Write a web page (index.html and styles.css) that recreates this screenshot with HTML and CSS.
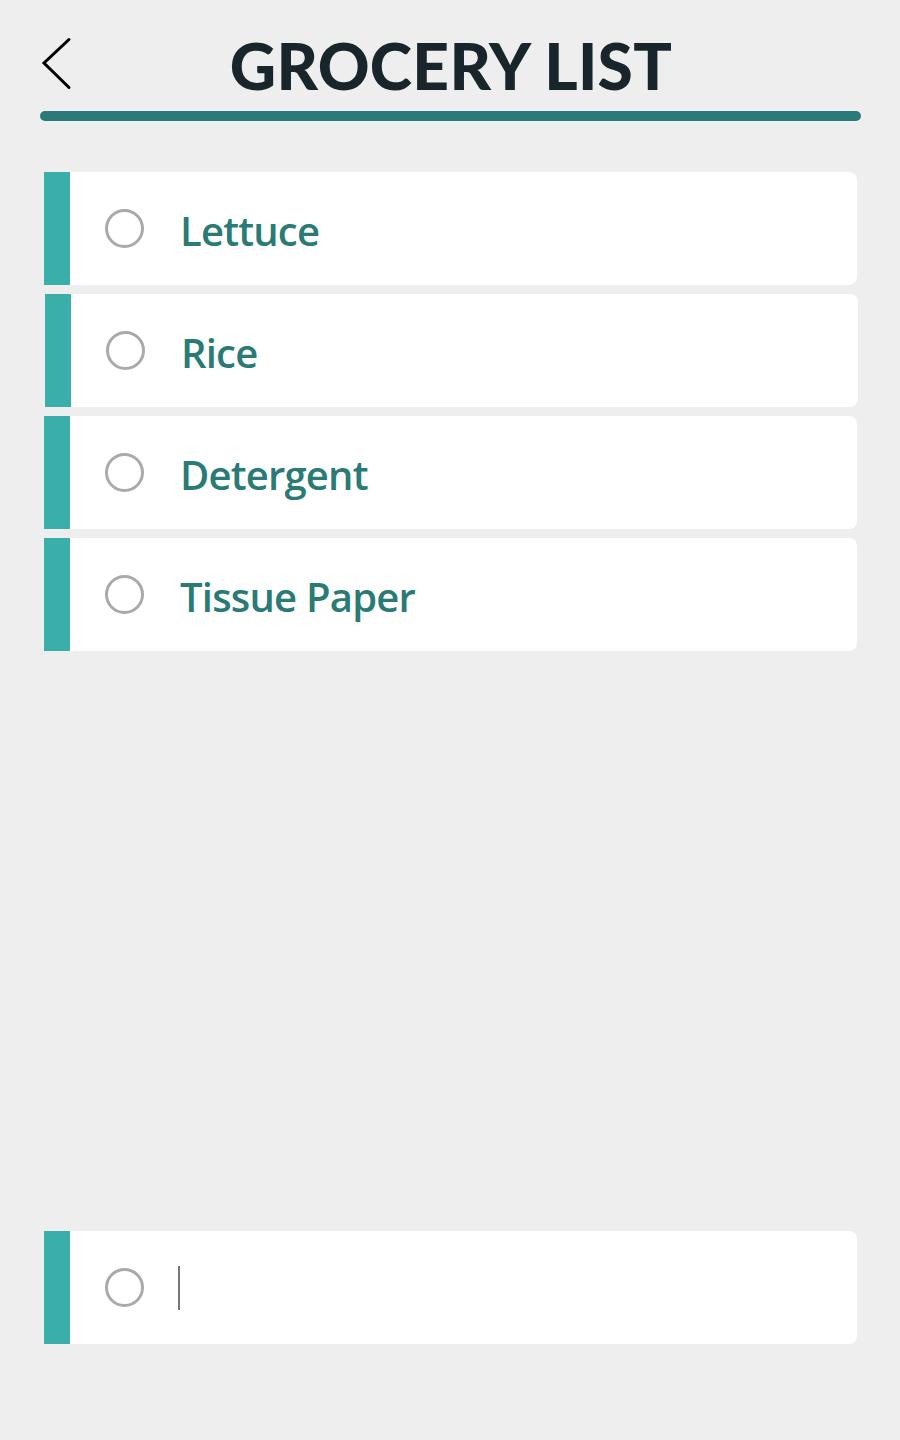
FILE: index.html
```html
<!DOCTYPE html>
<html>
<head>
<meta charset="utf-8">
<link rel="stylesheet" href="styles.css">
</head>
<body>
<div class="page">
  <header class="header">
    <svg class="back" width="34" height="54" viewBox="0 0 34 54"><path d="M29 2.5 L4 26 L29 50.5" fill="none" stroke="#000" stroke-width="3" stroke-linecap="round" stroke-linejoin="miter"/></svg>
    <h1 class="title">GROCERY LIST</h1>
  </header>
  <div class="rule"></div>
  <ul class="list">
    <li class="item"><span class="accent"></span><div class="body"><span class="check"></span><span class="label">Lettuce</span></div></li>
    <li class="item shift"><span class="accent"></span><div class="body"><span class="check"></span><span class="label">Rice</span></div></li>
    <li class="item"><span class="accent"></span><div class="body"><span class="check"></span><span class="label">Detergent</span></div></li>
    <li class="item"><span class="accent"></span><div class="body"><span class="check"></span><span class="label">Tissue Paper</span></div></li>
  </ul>
  <div class="item input-row"><span class="accent"></span><div class="body"><span class="check"></span><span class="caret"></span></div></div>
</div>
</body>
</html>
```
FILE: styles.css
```css
html, body {
  margin: 0;
  padding: 0;
  background: #eeeeee;
}
.page {
  min-height: 1440px;
  display: flex;
  flex-direction: column;
  box-sizing: border-box;
}
.header {
  position: relative;
  height: 111px;
  display: flex;
  align-items: flex-start;
  justify-content: center;
}
.back {
  position: absolute;
  left: 40px;
  top: 37px;
}
.title {
  margin: 0;
  margin-top: 28px;
  font-family: "Lato", sans-serif;
  font-weight: 900;
  font-size: 64px;
  line-height: 76px;
  letter-spacing: 0.3px;
  color: #18252a;
  padding-left: 2px;
}
.rule {
  margin: 0 39px 0 40px;
  height: 10px;
  border-radius: 5px;
  background: #2c7a78;
}
.list {
  list-style: none;
  margin: 51px 0 0 0;
  padding: 0 43px 0 44px;
  display: flex;
  flex-direction: column;
  gap: 9px;
}
.item {
  display: flex;
  height: 113px;
}
.item.shift {
  padding-left: 1px;
  margin-right: -1px;
}
.accent {
  width: 26px;
  background: #3aafa9;
  flex: none;
}
.body {
  flex: 1;
  background: #ffffff;
  border-radius: 0 8px 8px 0;
  display: flex;
  align-items: center;
  padding-left: 35px;
}
.check {
  width: 33px;
  height: 33px;
  border: 3px solid #aaaaaa;
  border-radius: 50%;
  flex: none;
}
.label {
  margin-left: 36px;
  font-family: "Open Sans", sans-serif;
  font-weight: 600;
  font-size: 40px;
  letter-spacing: -0.8px;
  color: #2a7a76;
  padding-top: 3px;
}
.input-row {
  margin: auto 43px 96px 44px;
}
.caret {
  margin-left: 34px;
  width: 2px;
  height: 44px;
  background: #777777;
}
```
